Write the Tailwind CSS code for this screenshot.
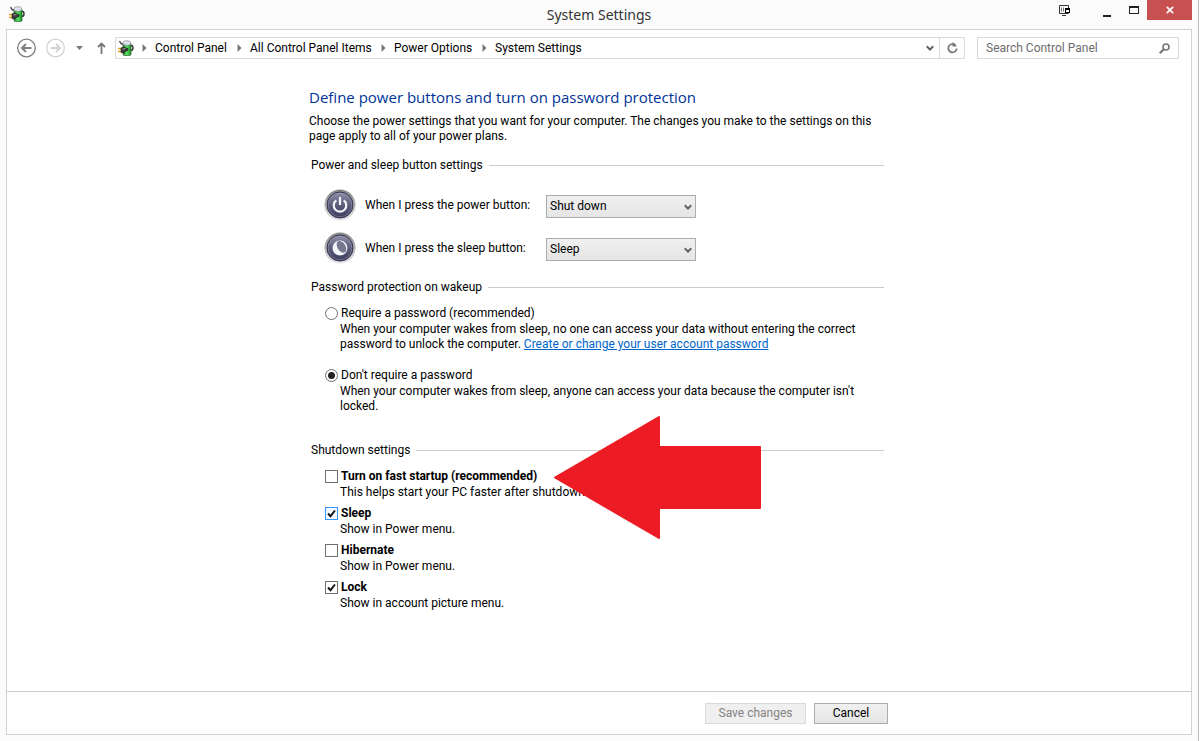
<!DOCTYPE html>
<html lang="en">
<head>
<meta charset="utf-8">
<meta name="viewport" content="width=device-width, initial-scale=1">
<title>System Settings</title>
<script src="https://cdn.jsdelivr.net/npm/@tailwindcss/browser@4"></script>
</head>
<body class="flex min-h-screen flex-col border-r border-[#bdbdbd] bg-[#fbfbfb] font-['Roboto','Open_Sans',sans-serif] text-[12px] leading-[15px] text-black">
<svg class="absolute size-0" aria-hidden="true">
  <defs>
    <linearGradient id="cell" x1="0" x2="1"><stop offset="0" stop-color="#1d8a2a"/><stop offset=".5" stop-color="#5fe36a"/><stop offset="1" stop-color="#128a20"/></linearGradient>
    <linearGradient id="rim" x1="0" x2="0" y1="0" y2="1"><stop offset="0" stop-color="#858585"/><stop offset=".5" stop-color="#b5b5b8"/><stop offset="1" stop-color="#e6e6e8"/></linearGradient>
    <linearGradient id="orb" x1="0" x2="0" y1="0" y2="1"><stop offset="0" stop-color="#9292aa"/><stop offset=".45" stop-color="#61617f"/><stop offset="1" stop-color="#3a3a5c"/></linearGradient>
    <symbol id="battery" viewBox="0 0 16 16">
      <path d="M1.500 1 3 3.500l2 1" fill="none" stroke="#444" stroke-width="1.400"/>
      <path d="M12 5.500h1.500c1.500 0 1.500 1.500 1.500 2.500s-.5 2.500-2.500 2.500" fill="none" stroke="#333" stroke-width="1.400"/>
      <rect x="5" y="2.500" width="8" height="13" rx="1.500" fill="url(#cell)" stroke="#17521c" stroke-width=".6"/>
      <path d="M5 4.500V2.500C5 .2 12.500.2 12.500 2.500V4.500c-2 1-5.500 1-7.500 0z" fill="#dfe2f2" stroke="#888" stroke-width=".7"/>
      <path d="M0 8.500h4M0 11.500h4" stroke="#e5a51b" stroke-width="1.500"/>
      <path d="M3 8 5.500 7l2.500 1 2 .5v2l-2 .5-2 2L3 12.500z" fill="#3c3c3c" stroke="#181818" stroke-width=".6"/>
      <path d="M4.500 9 7.500 8.500" stroke="#999"/>
    </symbol>
    <symbol id="crumb" viewBox="0 0 5 8"><path d="M.5 0 4.500 4 .5 8z" fill="#777"/></symbol>
    <symbol id="chev" viewBox="0 0 8 7"><path d="M.8 1.200 4 4.600 7.200 1.200" fill="none" stroke="#606060" stroke-width="2"/></symbol>
    <symbol id="button-face" viewBox="0 0 32 32">
      <circle cx="16" cy="16" r="15.500" fill="url(#rim)"/>
      <circle cx="16" cy="16" r="13" fill="url(#orb)" stroke="#34344f" stroke-width="1"/>
      <circle cx="16" cy="16" r="11.800" fill="none" stroke="#a5a5bb" stroke-opacity=".45" stroke-width="1"/>
    </symbol>
  </defs>
</svg>

<header class="relative flex h-[29px] items-start justify-between pl-[9px] pr-[6px]">
  <svg class="mt-[6px] size-4"><use href="#battery"/></svg>
  <h1 class="pointer-events-none absolute inset-x-0 top-[5px] text-center font-['Noto_Sans','Open_Sans',sans-serif] text-[14px] leading-5 text-[#333]">System Settings</h1>
  <div class="flex items-start">
    <button aria-label="Display options" class="mr-8 mt-[5px]">
      <svg class="block h-[11px] w-3" viewBox="0 0 12 11"><path d="M.5.500h9v8h-9zM3 10.500h4" fill="none" stroke="#333"/><path d="M2.500 2.500v4M4.500 2.500v4" stroke="#777"/><path d="M6 3h5v5H6z" fill="#000"/><path d="M7 5h3v2H7z" fill="#fff"/></svg>
    </button>
    <button aria-label="Minimize" class="mr-[18px] mt-3 block h-2 w-2"><span class="block h-[2px] bg-[#222]"></span></button>
    <button aria-label="Maximize" class="mr-2 mt-[6px] block h-2 w-[10px] border border-t-2 border-[#222]"></button>
    <button aria-label="Close" class="flex h-5 w-[45px] items-center justify-center bg-[#c75050]">
      <svg class="size-2" viewBox="0 0 8 8"><path d="m.8.800 6.400 6.400M7.200.800.800 7.200" stroke="#fff" stroke-width="1.700"/></svg>
    </button>
  </div>
</header>

<div class="mx-[6px] mb-[6px] flex grow flex-col border border-[#d2d2d2] bg-white">
  <nav class="mt-[7px] flex items-center pl-[9px] pr-3" aria-label="Address">
    <button aria-label="Back"><svg class="block size-5" viewBox="0 0 20 20" fill="none" stroke="#808080"><circle cx="10.500" cy="10" r="8.800" stroke-width="1.300"/><path d="M15.500 10H6.500M10 6 6 10l4 4" stroke-width="2"/></svg></button>
    <button aria-label="Forward" class="ml-[9px]"><svg class="block size-5" viewBox="0 0 20 20" fill="none" stroke="#d3d3d3"><circle cx="10.500" cy="10" r="8.800" stroke-width="1.300"/><path d="M5.500 10h9M11 6l4 4-4 4" stroke-width="2"/></svg></button>
    <button aria-label="Recent locations" class="ml-[11px]"><svg class="block h-1 w-[7px]" viewBox="0 0 8 4" preserveAspectRatio="none"><path d="M0 0h8L4 4z" fill="#777"/></svg></button>
    <button aria-label="Up" class="ml-[14px]"><svg class="block h-3 w-[9px]" viewBox="0 0 9 12"><path d="M4.500 12V1.500M1 5l3.500-3.500L8 5" fill="none" stroke="#777" stroke-width="1.800"/></svg></button>
    <div class="ml-[9px] flex h-[22px] grow items-center border border-[#d9d9d9] pl-[2px]">
      <svg class="size-4"><use href="#battery"/></svg>
      <ol class="flex grow items-center whitespace-nowrap">
        <li class="flex items-center"><svg class="mx-2 h-2 w-[5px]"><use href="#crumb"/></svg><a href="#" class="w-[72px]">Control Panel</a></li>
        <li class="flex items-center"><svg class="ml-[10px] mr-2 h-2 w-[5px]"><use href="#crumb"/></svg><a href="#" class="w-[121px]">All Control Panel Items</a></li>
        <li class="flex items-center"><svg class="ml-[10px] mr-2 h-2 w-[5px]"><use href="#crumb"/></svg><a href="#" class="w-[78px]">Power Options</a></li>
        <li class="flex items-center"><svg class="ml-[10px] mr-2 h-2 w-[5px]"><use href="#crumb"/></svg><a href="#">System Settings</a></li>
      </ol>
      <button aria-label="Previous locations" class="mr-[5px]"><svg class="block h-[7px] w-2"><use href="#chev"/></svg></button>
      <button aria-label="Refresh" class="flex h-full w-[25px] items-center justify-center border-l border-[#d9d9d9]"><svg class="h-3 w-[11px]" viewBox="0 0 11 12"><path d="M8.500 3.200A4.200 4.200 0 1 0 9.700 6.500" fill="none" stroke="#777" stroke-width="1.700"/><path d="M5.500 0v4.500H10z" fill="#777"/></svg></button>
    </div>
    <form class="ml-3 flex h-[22px] w-[202px] items-center border border-[#d9d9d9] pl-2 pr-[8px]">
      <input type="search" aria-label="Search Control Panel" placeholder="Search Control Panel" class="min-w-0 grow outline-none placeholder:text-[#6d6d6d]">
      <svg class="size-[11px]" viewBox="0 0 11 11"><circle cx="7" cy="4" r="3" fill="none" stroke="#777" stroke-width="1.600"/><path d="M5 6 .8 10.200" stroke="#777" stroke-width="2.200"/></svg>
    </form>
  </nav>

  <main class="relative mx-auto mt-[26px] w-[580px] grow whitespace-nowrap pr-[5px]">
    <h2 class="font-['Open_Sans','Noto_Sans',sans-serif] text-[15px] leading-6 text-[#003399]">Define power buttons and turn on password protection</h2>
    <p class="mt-[5px]">Choose the power settings that you want for your computer. The changes you make to the settings on this<br>page apply to all of your power plans.</p>

    <section class="pl-[2px]">
      <h3 class="mt-[13px] flex items-center gap-[6px] leading-4"><span>Power and sleep button settings</span><span class="h-px grow bg-[#ccc]"></span></h3>
      <div class="mt-4 flex h-8 items-center pl-[13px]">
        <svg class="size-8" viewBox="0 0 32 32"><use href="#button-face"/><path d="M12.300 11.300a6.300 6.300 0 1 0 7.400 0" fill="none" stroke="#f4f4fa" stroke-width="2.200"/><path d="M16 8v8" stroke="#f4f4fa" stroke-width="2.200"/></svg>
        <label for="power" class="ml-[9px] w-[181px]">When I press the power button:</label>
        <div class="relative mt-[2px]">
          <select id="power" class="block h-[23px] w-[150px] appearance-none border border-[#acacac] bg-linear-to-b from-[#f0f0f0] to-[#e5e5e5] pl-[3px]"><option>Shut down</option><option>Sleep</option></select>
          <svg class="pointer-events-none absolute right-1 top-[9px] h-[7px] w-2"><use href="#chev"/></svg>
        </div>
      </div>
      <div class="mt-[11px] flex h-8 items-center pl-[13px]">
        <svg class="size-8" viewBox="0 0 32 32"><use href="#button-face"/><circle cx="16" cy="16" r="7.500" fill="#f4f4fa"/><ellipse cx="17.500" cy="14.800" rx="4" ry="6.500" transform="rotate(-32 17.500 14.800)" fill="#77778f"/></svg>
        <label for="sleepbtn" class="ml-[9px] w-[181px]">When I press the sleep button:</label>
        <div class="relative mt-[2px]">
          <select id="sleepbtn" class="block h-[23px] w-[150px] appearance-none border border-[#acacac] bg-linear-to-b from-[#f0f0f0] to-[#e5e5e5] pl-[3px]"><option>Sleep</option><option>Shut down</option></select>
          <svg class="pointer-events-none absolute right-1 top-[9px] h-[7px] w-2"><use href="#chev"/></svg>
        </div>
      </div>
    </section>

    <section class="pl-[2px]">
      <h3 class="mt-[15px] flex items-center gap-[6px] leading-4"><span>Password protection on wakeup</span><span class="h-px grow bg-[#ccc]"></span></h3>
      <div class="mt-[10px] flex h-4 items-center gap-[3px] pl-[14px]">
        <input id="req" type="radio" name="wake" class="size-[13px] appearance-none rounded-full border border-[#707070] bg-white bg-clip-content p-[2px] checked:bg-[#222]">
        <label for="req">Require a password (recommended)</label>
      </div>
      <p class="mt-px pl-[29px]">When your computer wakes from sleep, no one can access your data without entering the correct<br>password to unlock the computer. <a href="#" class="text-[#0066cc] underline">Create or change your user account password</a></p>
      <div class="mt-[15px] flex h-4 items-center gap-[3px] pl-[14px]">
        <input id="noreq" type="radio" name="wake" checked class="size-[13px] appearance-none rounded-full border border-[#707070] bg-white bg-clip-content p-[2px] checked:bg-[#222]">
        <label for="noreq">Don't require a password</label>
      </div>
      <p class="mt-px pl-[29px]">When your computer wakes from sleep, anyone can access your data because the computer isn't<br>locked.</p>
    </section>

    <section class="pl-[2px]">
      <h3 class="mt-[28px] flex items-center gap-[6px] leading-4"><span>Shutdown settings</span><span class="h-px grow bg-[#ccc]"></span></h3>
      <ul class="mt-[10px] flex flex-col gap-[5px] pl-[14px]">
        <li>
          <div class="flex h-4 items-center gap-[3px]"><span class="relative"><input id="fast" type="checkbox" class="block size-[13px] appearance-none border border-[#707070] bg-white"></span><label for="fast" class="font-bold">Turn on fast startup (recommended)</label></div>
          <p class="mt-px pl-[15px]">This helps start your PC faster after shutdown.</p>
        </li>
        <li>
          <div class="flex h-4 items-center gap-[3px]"><span class="relative"><input id="sleep" type="checkbox" checked class="block size-[13px] appearance-none border border-[#3399ff] bg-[#f3f9ff]"><svg class="pointer-events-none absolute inset-0 size-[13px]" viewBox="0 0 13 13"><path d="m3 6.500 2.500 2.700L10 3.500" fill="none" stroke="#111" stroke-width="1.900"/></svg></span><label for="sleep" class="font-bold">Sleep</label></div>
          <p class="mt-px pl-[15px]">Show in Power menu.</p>
        </li>
        <li>
          <div class="flex h-4 items-center gap-[3px]"><span class="relative"><input id="hib" type="checkbox" class="block size-[13px] appearance-none border border-[#707070] bg-white"></span><label for="hib" class="font-bold">Hibernate</label></div>
          <p class="mt-px pl-[15px]">Show in Power menu.</p>
        </li>
        <li>
          <div class="flex h-4 items-center gap-[3px]"><span class="relative"><input id="lock" type="checkbox" checked class="block size-[13px] appearance-none border border-[#707070] bg-white"><svg class="pointer-events-none absolute inset-0 size-[13px]" viewBox="0 0 13 13"><path d="m3 6.500 2.500 2.700L10 3.500" fill="none" stroke="#111" stroke-width="1.900"/></svg></span><label for="lock" class="font-bold">Lock</label></div>
          <p class="mt-px pl-[15px]">Show in account picture menu.</p>
        </li>
      </ul>
    </section>
    <svg class="pointer-events-none absolute left-[245px] top-[331px] h-[123px] w-[207px]" viewBox="0 0 207 123" aria-hidden="true"><path d="M1 61.500 105 1v30h101v61H105v30z" fill="#ed1c24" stroke="#ed1c24" stroke-width="2" stroke-linejoin="round"/></svg>
  </main>

  <footer class="flex h-[43px] justify-center border-t border-[#ccc]">
    <div class="flex w-[580px] items-center justify-end gap-2 pr-px">
      <button disabled class="h-[21px] w-[101px] border border-[#d9d9d9] bg-[#efefef] text-[#838383]">Save changes</button>
      <button class="h-[21px] w-[74px] border border-[#acacac] bg-linear-to-b from-[#f0f0f0] to-[#e5e5e5]">Cancel</button>
    </div>
  </footer>
</div>
</body>
</html>
